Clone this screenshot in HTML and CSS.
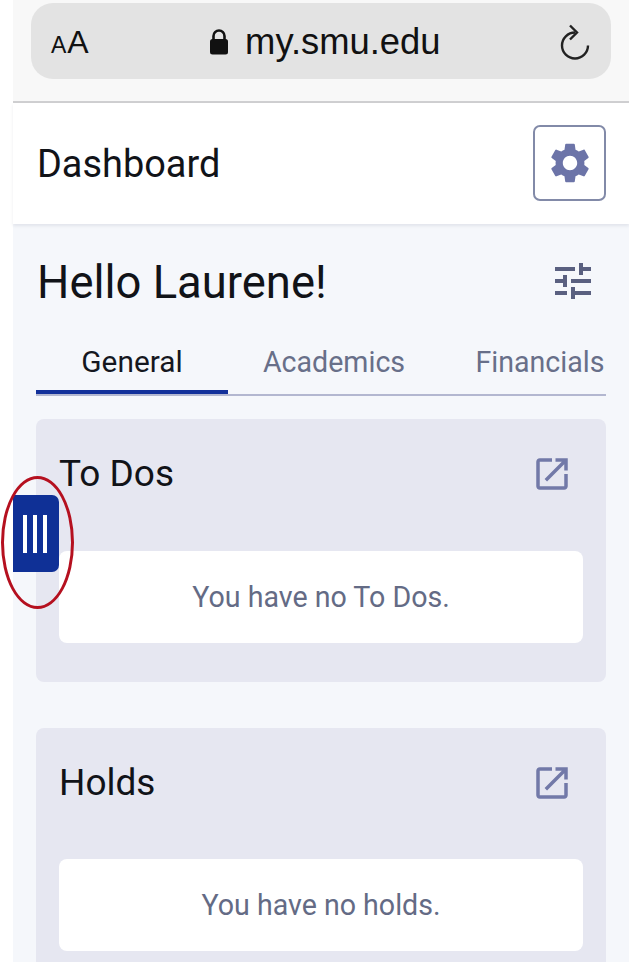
FILE: index.html
```html
<!DOCTYPE html>
<html lang="en">
<head>
    <meta charset="UTF-8">
    <meta name="viewport" content="width=device-width, initial-scale=1.0">
    <title>Dashboard - my.smu.edu</title>
    <link rel="stylesheet" href="styles.css">
</head>
<body>
    <div class="page">
        <!-- Mobile browser chrome -->
        <div class="browser">
            <div class="address-bar">
                <span class="text-size"><span class="text-size-small">A</span>A</span>
                <span class="url">
                    <svg class="lock" viewBox="0 0 20 26"><path d="M4.5 11V7a5.5 5.5 0 0 1 11 0v4" fill="none" stroke="#111" stroke-width="2.6"/><rect x="1" y="10" width="18" height="15.5" rx="2.5" fill="#111"/></svg>
                    my.smu.edu
                </span>
                <svg class="reload" viewBox="0 0 32 36"><path d="M16 8.5A13 13 0 1 0 29 21.5" fill="none" stroke="#222" stroke-width="2.4"/><path d="M11 1.5l7 7-7 7" fill="none" stroke="#222" stroke-width="2.4"/></svg>
            </div>
        </div>

        <header class="header">
            <h1>Dashboard</h1>
            <button class="settings-btn">
                <svg class="gear" viewBox="0 0 24 24"><path d="M19.14 12.94c.04-.3.06-.61.06-.94 0-.32-.02-.64-.07-.94l2.03-1.58c.18-.14.23-.41.12-.61l-1.92-3.32c-.12-.22-.37-.29-.59-.22l-2.39.96c-.5-.38-1.03-.7-1.62-.94l-.36-2.54c-.04-.24-.24-.41-.48-.41h-3.84c-.24 0-.43.17-.47.41l-.36 2.54c-.59.24-1.13.57-1.62.94l-2.39-.96c-.22-.08-.47 0-.59.22L2.74 8.87c-.12.21-.08.47.12.61l2.03 1.58c-.05.3-.09.63-.09.94s.02.64.07.94l-2.03 1.58c-.18.14-.23.41-.12.61l1.92 3.32c.12.22.37.29.59.22l2.39-.96c.5.38 1.03.7 1.62.94l.36 2.54c.05.24.24.41.48.41h3.84c.24 0 .44-.17.47-.41l.36-2.54c.59-.24 1.13-.56 1.62-.94l2.39.96c.22.08.47 0 .59-.22l1.92-3.32c.12-.22.07-.47-.12-.61l-2.01-1.58zM12 15.6c-1.98 0-3.6-1.62-3.6-3.6s1.62-3.6 3.6-3.6 3.6 1.62 3.6 3.6-1.62 3.6-3.6 3.6z"/></svg>
            </button>
        </header>

        <main class="content">
            <div class="greeting">
                <h2>Hello Laurene!</h2>
                <svg class="tune" viewBox="0 0 24 24"><path d="M3 17v2h6v-2H3zM3 5v2h10V5H3zm10 16v-2h8v-2h-8v-2h-2v6h2zM7 9v2H3v2h4v2h2V9H7zm14 4v-2H11v2h10zm-6-4h2V7h4V5h-4V3h-2v6z"/></svg>
            </div>

            <nav class="tabs">
                <a class="tab tab-active">General</a>
                <a class="tab">Academics</a>
                <a class="tab">Financials</a>
            </nav>

            <section class="card">
                <div class="card-head">
                    <h3>To Dos</h3>
                    <svg class="open-icon" viewBox="0 0 24 24"><path d="M19 19H5V5h7V3H5c-1.11 0-2 .9-2 2v14c0 1.1.89 2 2 2h14c1.1 0 2-.9 2-2v-7h-2v7zM14 3v2h3.59l-9.83 9.83 1.41 1.41L19 6.41V10h2V3h-7z"/></svg>
                </div>
                <div class="card-empty">You have no To Dos.</div>
            </section>

            <section class="card">
                <div class="card-head">
                    <h3>Holds</h3>
                    <svg class="open-icon" viewBox="0 0 24 24"><path d="M19 19H5V5h7V3H5c-1.11 0-2 .9-2 2v14c0 1.1.89 2 2 2h14c1.1 0 2-.9 2-2v-7h-2v7zM14 3v2h3.59l-9.83 9.83 1.41 1.41L19 6.41V10h2V3h-7z"/></svg>
                </div>
                <div class="card-empty">You have no holds.</div>
            </section>
        </main>

        <!-- Side menu handle with the red annotation ring -->
        <div class="handle"><span></span><span></span><span></span></div>
        <div class="annotation"></div>
    </div>
</body>
</html>
```

FILE: styles.css
```css
* {
    margin: 0;
    padding: 0;
    box-sizing: border-box;
}

html, body {
    height: 100%;
    overflow: hidden;
    background: white;
}

body {
    font-family: Roboto, "Noto Sans", sans-serif;
    color: #111318;
}

.page {
    position: relative;
    height: 962px;
    padding-left: 13px;
    overflow: hidden;
}

.browser {
    height: 103px;
    padding: 3px 18px 0;
    background: #f8f8f8;
    border-bottom: 2px solid #cfcfd1;
}

.address-bar {
    height: 76px;
    background: #e3e3e3;
    border-radius: 22px;
    display: flex;
    align-items: center;
    justify-content: space-between;
    padding: 2px 20px 0;
    font-family: "Liberation Sans", sans-serif;
}

.text-size {
    font-size: 32px;
    color: #111;
}

.text-size-small {
    font-size: 23px;
    margin-right: 1px;
}

.url {
    display: flex;
    align-items: center;
    gap: 16px;
    font-size: 36.4px;
    color: #111;
    margin-left: 2px;
}

.lock {
    width: 20px;
    height: 26px;
}

.reload {
    width: 32px;
    height: 36px;
}

.header {
    height: 121px;
    background: white;
    display: flex;
    align-items: center;
    justify-content: space-between;
    padding: 0 23px 2px 24px;
    box-shadow: 0 2px 3px rgba(60, 64, 100, 0.1);
    position: relative;
}

h1 {
    font-size: 37.9px;
    font-weight: 400;
    margin-top: 2px;
}

.settings-btn {
    width: 73px;
    height: 76px;
    background: white;
    border: 2px solid #828aa8;
    border-radius: 7px;
    display: flex;
    align-items: center;
    justify-content: center;
}

.gear {
    width: 48px;
    height: 48px;
    fill: #6c74a8;
}

.content {
    background: #f5f7fb;
    height: 738px;
    padding: 0 23px;
}

.greeting {
    height: 118px;
    display: flex;
    align-items: center;
    justify-content: space-between;
    padding: 0 9px 4px 1px;
}

h2 {
    font-size: 45.4px;
    font-weight: 400;
    margin-top: 2px;
}

.tune {
    width: 48px;
    height: 48px;
    fill: #5a6080;
}

.tabs {
    display: grid;
    grid-template-columns: 192px 192px 200px;
    column-gap: 10px;
    height: 54px;
    border-bottom: 2px solid #b3b7d0;
    overflow: hidden;
}

.tab {
    display: block;
    text-align: center;
    font-size: 28.6px;
    line-height: 40px;
    color: #686f89;
}

.tab-active {
    font-size: 29.8px;
    color: #15171f;
    border-bottom: 4px solid #12309a;
    height: 52px;
}

.card {
    background: #e6e7f1;
    border-radius: 8px;
    margin-top: 23px;
    height: 263px;
    padding: 0 23px;
}

.card + .card {
    margin-top: 46px;
}

.card-head {
    height: 132px;
    display: flex;
    justify-content: space-between;
    padding: 33px 0 0 0;
}

.card + .card .card-head {
    height: 131px;
}

h3 {
    font-size: 37px;
    font-weight: 400;
    line-height: 44px;
}

.open-icon {
    width: 42px;
    height: 42px;
    fill: #7279a8;
    margin: 1px 10px 0 0;
}

.card-empty {
    background: white;
    border-radius: 8px;
    height: 92px;
    display: flex;
    align-items: center;
    justify-content: center;
    font-size: 28.6px;
    color: #646b85;
}

.handle {
    position: absolute;
    left: 13px;
    top: 495px;
    width: 46px;
    height: 77px;
    background: #0f3096;
    border-radius: 0 7px 7px 0;
    display: flex;
    align-items: center;
    justify-content: center;
    gap: 6px;
    padding: 1px 2px 0 0;
}

.handle span {
    width: 4px;
    height: 38px;
    background: white;
}

.annotation {
    position: absolute;
    left: 1px;
    top: 476px;
    width: 73px;
    height: 133px;
    border: 3px solid #b5101f;
    border-radius: 50%;
}
```
